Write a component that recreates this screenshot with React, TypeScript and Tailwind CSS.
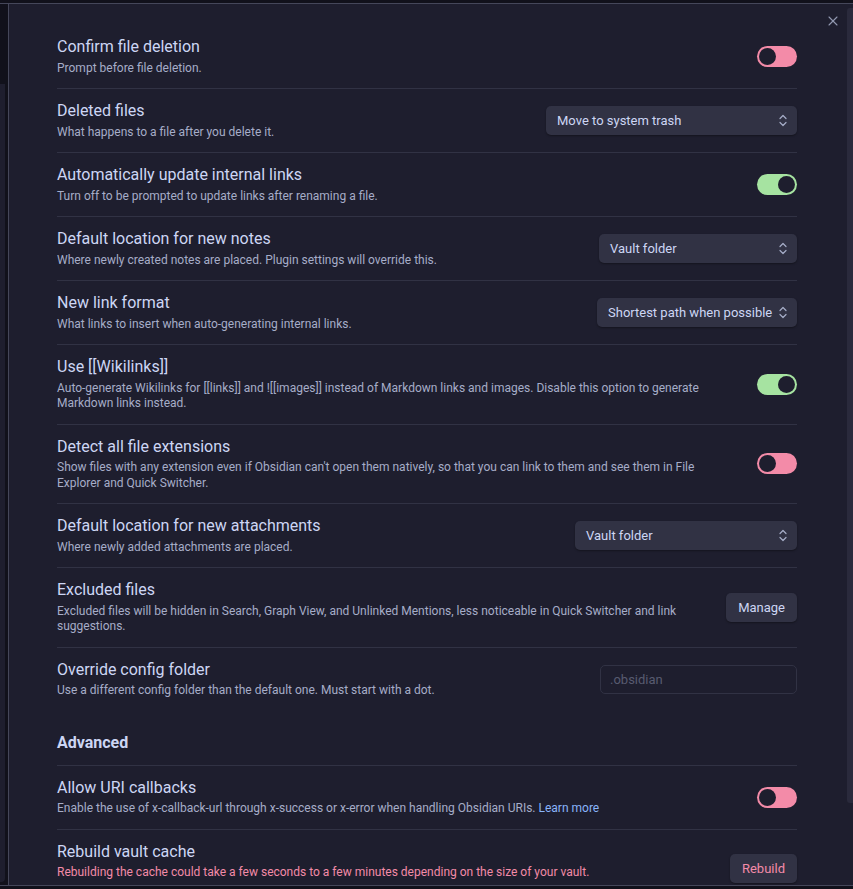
import { X } from "lucide-react";

type Row = {
  name: string;
  desc: React.ReactNode;
  control: React.ReactNode;
  danger?: boolean;
  tall?: boolean;
};

function Toggle({ on }: { on: boolean }) {
  return (
    <div
      className={`w-[40px] h-[21px] rounded-full flex items-center px-[2px] shrink-0 ${
        on ? "bg-[#a6e3a1] justify-end" : "bg-[#f38ba8] justify-start"
      }`}
    >
      <div className="w-[17px] h-[17px] rounded-full bg-[#1e1e2e]" />
    </div>
  );
}

function Chevrons() {
  return (
    <svg width="8" height="13" viewBox="0 0 8 13" fill="none" stroke="#a6adc8" strokeWidth="1.2" strokeLinecap="round" strokeLinejoin="round">
      <path d="M1 4.5 L4 1.5 L7 4.5" />
      <path d="M1 8.5 L4 11.5 L7 8.5" />
    </svg>
  );
}

function Select({ value, width }: { value: string; width: string }) {
  return (
    <div
      className={`${width} h-[29px] rounded-[5px] bg-[#313244] shadow-[0_1px_2px_rgba(0,0,0,0.35)] flex items-center justify-between pl-[11px] pr-[10px] text-[13px] text-[#cdd6f4] shrink-0`}
    >
      <span className="whitespace-nowrap">{value}</span>
      <Chevrons />
    </div>
  );
}

function Button({ label, danger }: { label: string; danger?: boolean }) {
  return (
    <div
      className={`h-[29px] rounded-[5px] bg-[#313244] shadow-[0_1px_2px_rgba(0,0,0,0.35)] px-[12px] flex items-center text-[13px] shrink-0 ${
        danger ? "text-[#f38ba8]" : "text-[#cdd6f4]"
      }`}
    >
      {label}
    </div>
  );
}

function SettingItem({ row, first }: { row: Row; first?: boolean }) {
  return (
    <div
      className={`flex items-center gap-[16px] py-[12px] ${
        first ? "" : "border-t border-[#313244]"
      }`}
    >
      <div className="flex-1 min-w-0">
        <div className="text-[16px] leading-[20.5px] text-[#cdd6f4]">{row.name}</div>
        <div
          className={`pt-[3px] text-[12px] leading-[15.5px] ${
            row.danger ? "text-[#f38ba8]" : "text-[#a6adc8]"
          } ${row.tall ? "min-h-[34px]" : ""}`}
        >
          {row.desc}
        </div>
      </div>
      {row.control}
    </div>
  );
}

const filesRows: Row[] = [
  {
    name: "Confirm file deletion",
    desc: "Prompt before file deletion.",
    control: <Toggle on={false} />,
  },
  {
    name: "Deleted files",
    desc: "What happens to a file after you delete it.",
    control: <Select value="Move to system trash" width="w-[251px]" />,
  },
  {
    name: "Automatically update internal links",
    desc: "Turn off to be prompted to update links after renaming a file.",
    control: <Toggle on />,
  },
  {
    name: "Default location for new notes",
    desc: "Where newly created notes are placed. Plugin settings will override this.",
    control: <Select value="Vault folder" width="w-[198px]" />,
  },
  {
    name: "New link format",
    desc: "What links to insert when auto-generating internal links.",
    control: <Select value="Shortest path when possible" width="w-[200px]" />,
  },
  {
    name: "Use [[Wikilinks]]",
    desc: "Auto-generate Wikilinks for [[links]] and ![[images]] instead of Markdown links and images. Disable this option to generate Markdown links instead.",
    control: <Toggle on />,
  },
  {
    name: "Detect all file extensions",
    desc: "Show files with any extension even if Obsidian can't open them natively, so that you can link to them and see them in File Explorer and Quick Switcher.",
    control: <Toggle on={false} />,
  },
  {
    name: "Default location for new attachments",
    desc: "Where newly added attachments are placed.",
    control: <Select value="Vault folder" width="w-[222px]" />,
  },
  {
    name: "Excluded files",
    desc: "Excluded files will be hidden in Search, Graph View, and Unlinked Mentions, less noticeable in Quick Switcher and link suggestions.",
    control: <Button label="Manage" />,
  },
  {
    name: "Override config folder",
    desc: "Use a different config folder than the default one. Must start with a dot.",
    control: (
      <input
        readOnly
        placeholder=".obsidian"
        className="w-[197px] h-[29px] rounded-[5px] bg-[#1e1e2e] border border-[#313244] px-[9px] text-[13px] text-[#cdd6f4] placeholder:text-[#585b70] outline-none shrink-0"
      />
    ),
  },
];

const advancedRows: Row[] = [
  {
    name: "Allow URI callbacks",
    desc: (
      <>
        Enable the use of x-callback-url through x-success or x-error when handling Obsidian URIs.{" "}
        <span className="text-[#89b4fa]">Learn more</span>
      </>
    ),
    control: <Toggle on={false} />,
  },
  {
    name: "Rebuild vault cache",
    desc: "Rebuilding the cache could take a few seconds to a few minutes depending on the size of your vault.",
    danger: true,
    tall: true,
    control: <Button label="Rebuild" danger />,
  },
];

export default function App() {
  return (
    <div
      className="w-[853px] h-[889px] bg-[#11111b] flex flex-col overflow-hidden"
      style={{ fontFamily: "Roboto, 'Liberation Sans', sans-serif" }}
    >
      <div className="h-[4px] shrink-0 border-b border-[#45475a]" />
      <div className="flex-1 min-h-0 flex">
        <div className="w-[9px] shrink-0 border-r border-[#45475a] bg-[#11111b] pt-[80px] pb-[3px]">
          <div className="h-full w-[5px] rounded-br-[4px] bg-[#1e1e2e]" />
        </div>
        <div className="flex-1 min-w-0 relative bg-[#1e1e2e] flex overflow-hidden">
          <button className="absolute left-[816px] top-[9px] text-[#9399b2]">
            <X size={16} strokeWidth={1.6} />
          </button>
          <div className="flex-1 min-w-0 pl-[48px] pr-[50px] pt-[21px]">
            {filesRows.map((r, i) => (
              <SettingItem key={r.name} row={r} first={i === 0} />
            ))}
            <div className="pt-[21px] pb-[12px] text-[16px] leading-[21px] font-bold text-[#cdd6f4]">
              Advanced
            </div>
            {advancedRows.map((r) => (
              <SettingItem key={r.name} row={r} />
            ))}
          </div>
          <div className="w-[6px] shrink-0 pt-[4px]">
            <div className="h-[795px] rounded-l-[3px] bg-[#2a2a3c]" />
          </div>
        </div>
      </div>
      <div className="h-[4px] shrink-0 border-t border-[#45475a]" />
    </div>
  );
}
